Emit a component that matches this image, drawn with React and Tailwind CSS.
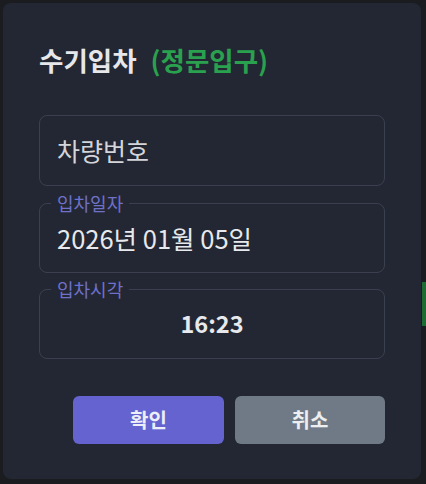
export default function App() {
  const font = { fontFamily: '"Noto Sans CJK KR", "Noto Sans", sans-serif' };
  return (
    <div className="relative w-[426px] h-[484px] bg-[#1a1c1f] p-[3px] overflow-hidden" style={font}>
      <div className="absolute right-0 top-[282px] w-[4px] h-[44px] bg-[#1f6b34]" />
      <div className="relative w-[418px] h-[476px] rounded-[8px] bg-[#222733] px-[36px] pt-[37px] flex flex-col">
        <div className="flex items-center h-[40px]">
          <span className="text-[26.5px] font-bold text-[#e6e7ea] leading-none">수기입차</span>
          <span className="ml-[14px] text-[26.5px] font-semibold text-[#2aa14e] leading-none">(정문입구)</span>
        </div>

        <div className="mt-[35px] h-[71px] rounded-[8px] border border-[#3a4050] flex items-center px-[17px]">
          <span className="text-[25px] text-[#d3d5da] leading-none">차량번호</span>
        </div>

        <div className="relative mt-[17px] h-[70px] rounded-[8px] border border-[#3a4050] flex items-center px-[17px]">
          <span className="absolute left-[11px] -top-[12px] px-[6px] bg-[#222733] text-[18px] leading-[22px] text-[#6f70c9]">입차일자</span>
          <span className="text-[25.5px] text-[#e8e9ec] leading-none">2026년 01월 05일</span>
        </div>

        <div className="relative mt-[16px] h-[70px] rounded-[8px] border border-[#3a4050] flex items-center justify-center px-[17px]">
          <span className="absolute left-[11px] -top-[12px] px-[6px] bg-[#222733] text-[18px] leading-[22px] text-[#6f70c9]">입차시각</span>
          <span className="text-[23.5px] font-semibold text-[#e8e9ec] leading-none">16:23</span>
        </div>

        <div className="mt-[37px] flex justify-end gap-[11px]">
          <button className="w-[151px] h-[48px] rounded-[6px] bg-[#6463cf] text-[20px] font-bold text-[#eeeefa]">확인</button>
          <button className="w-[150px] h-[48px] rounded-[6px] bg-[#6f7a86] text-[20px] font-bold text-[#eceef0]">취소</button>
        </div>
      </div>
    </div>
  );
}
